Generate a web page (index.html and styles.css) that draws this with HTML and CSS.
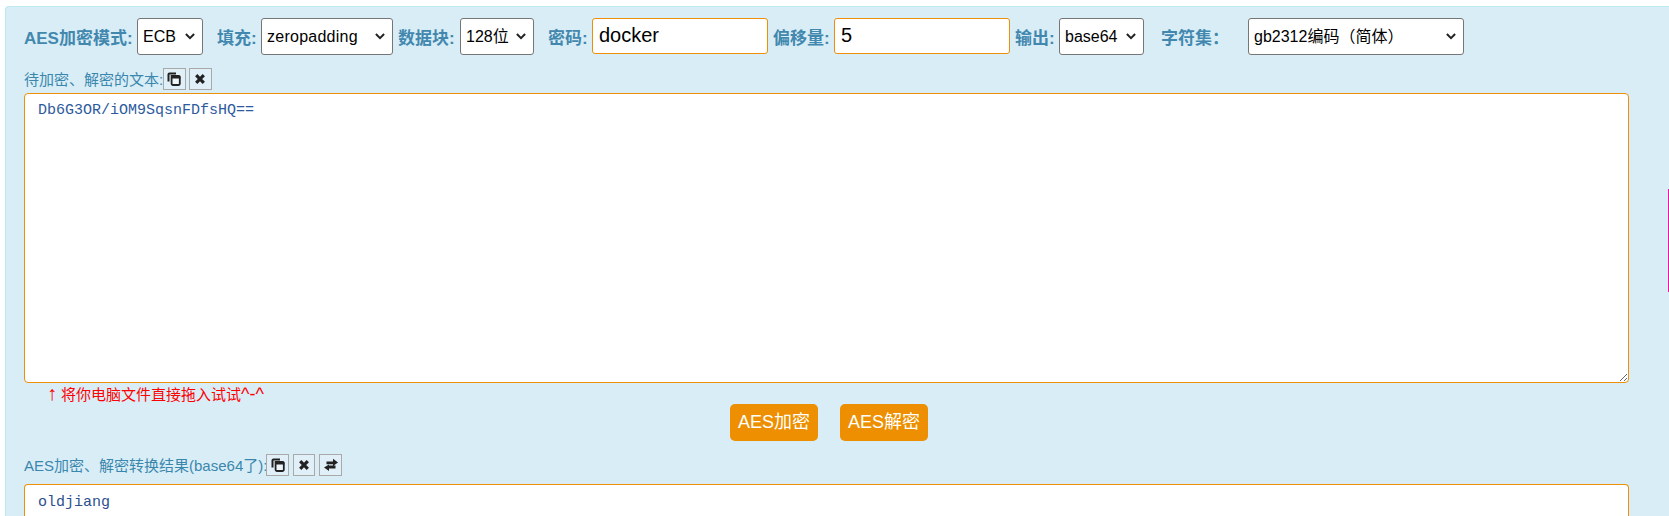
FILE: index.html
```html
<!DOCTYPE html>
<html lang="zh-CN">
<head>
<meta charset="utf-8">
<title>AES加密</title>
<link rel="stylesheet" href="styles.css">
</head>
<body>
<main class="panel">
  <form class="options">
    <label class="opt opt-mode">AES加密模式:</label>
    <select class="sel sel-mode"><option>ECB</option></select>
    <label class="opt opt-pad">填充:</label>
    <select class="sel sel-pad"><option>zeropadding</option></select>
    <label class="opt opt-block">数据块:</label>
    <select class="sel sel-block"><option>128位</option></select>
    <label class="opt opt-pass">密码:</label>
    <input class="field" type="text" value="docker">
    <label class="opt opt-iv">偏移量:</label>
    <input class="field" type="text" value="5">
    <label class="opt opt-out">输出:</label>
    <select class="sel sel-out"><option>base64</option></select>
    <label class="opt opt-charset">字符集：</label>
    <select class="sel sel-charset"><option>gb2312编码（简体）</option></select>
  </form>

  <div class="cap cap-first">
    <span>待加密、解密的文本:</span>
    <button class="tool" type="button" title="复制">
      <svg viewBox="0 0 14 14" class="ico"><path d="M1.5 9.5V2.5a1 1 0 0 1 1-1H9" class="ico-line"/><path d="M4.6 4h6.8a1.4 1.4 0 0 1 1.4 1.4v6.2a1.4 1.4 0 0 1-1.4 1.4H6a1.4 1.4 0 0 1-1.4-1.4z" class="ico-front"/><path d="M4 3.4h8.4l1 1.2v2H4z" class="ico-fill"/></svg>
    </button>
    <button class="tool" type="button" title="清空">
      <svg viewBox="0 0 14 14" class="ico"><path d="M3.2 3.2l7.6 7.6M10.8 3.2l-7.6 7.6" class="ico-x"/></svg>
    </button>
  </div>
  <textarea class="text text-in" spellcheck="false">Db6G3OR/iOM9SqsnFDfsHQ==</textarea>
  <p class="hint"><span class="hint-arrow">↑</span>将你电脑文件直接拖入试试<span class="hint-face">^-^</span></p>

  <div class="actions">
    <button class="go" type="button">AES加密</button>
    <button class="go" type="button">AES解密</button>
  </div>

  <div class="cap cap-second">
    <span>AES加密、解密转换结果(base64了):</span>
    <button class="tool" type="button" title="复制">
      <svg viewBox="0 0 14 14" class="ico"><path d="M1.5 9.5V2.5a1 1 0 0 1 1-1H9" class="ico-line"/><path d="M4.6 4h6.8a1.4 1.4 0 0 1 1.4 1.4v6.2a1.4 1.4 0 0 1-1.4 1.4H6a1.4 1.4 0 0 1-1.4-1.4z" class="ico-front"/><path d="M4 3.4h8.4l1 1.2v2H4z" class="ico-fill"/></svg>
    </button>
    <button class="tool" type="button" title="清空">
      <svg viewBox="0 0 14 14" class="ico"><path d="M3.2 3.2l7.6 7.6M10.8 3.2l-7.6 7.6" class="ico-x"/></svg>
    </button>
    <button class="tool" type="button" title="交换">
      <svg viewBox="0 0 14 14" class="ico"><path d="M2.5 3.4H9V.8L14 4.6 9 8V6.2H2.5zM11.5 7.6V10.4H5V13L0 9.6 5 6.4V7.6z" class="ico-solid"/></svg>
    </button>
  </div>
  <textarea class="text text-out" spellcheck="false">oldjiang</textarea>
</main>
<div class="side-mark"></div>
</body>
</html>
```
FILE: styles.css
```css
html, body {
  margin: 0;
  padding: 0;
  height: 516px;
  overflow: hidden;
  background: #fff;
}

body {
  position: relative;
  font-family: "Liberation Sans", "Noto Sans CJK SC", sans-serif;
}

.panel {
  box-sizing: border-box;
  width: 1664px;
  height: 510px;
  margin: 6px 0 0 5px;
  padding: 11px 0 0 18px;
  background: #d9edf7;
  border: 1px solid #bce8f1;
  border-width: 1px 0 0 1px;
  border-radius: 4px 0 0 0;
  color: #3a87ad;
}

.options {
  display: flex;
  align-items: center;
  height: 37px;
}

.opt {
  font-size: 17px;
  font-weight: 700;
  white-space: nowrap;
  color: #4288ae;
}

.opt-mode { width: 113px; }
.opt-pad { width: 44px; margin-left: 14px; }
.opt-block { width: 62px; margin-left: 5px; }
.opt-pass { width: 44px; margin-left: 14px; }
.opt-iv { width: 61px; margin-left: 5px; }
.opt-out { width: 44px; margin-left: 5px; }
.opt-charset { width: 87px; margin-left: 17px; }

.sel {
  box-sizing: border-box;
  appearance: none;
  height: 37px;
  margin: 0;
  padding: 0 20px 0 5px;
  font-family: inherit;
  font-size: 16px;
  color: #000;
  background-color: #fff;
  background-image: url("data:image/svg+xml,%3Csvg xmlns='http://www.w3.org/2000/svg' width='10' height='7' viewBox='0 0 10 7'%3E%3Cpath d='M.9 1l4.1 4.1L9.1 1' fill='none' stroke='%23222' stroke-width='2'/%3E%3C/svg%3E");
  background-repeat: no-repeat;
  background-position: right 7px center;
  border: 1px solid #767676;
  border-radius: 3px;
}

.sel-mode { width: 66px; }
.sel-pad { width: 132px; letter-spacing: .25px; }
.sel-block { width: 74px; }
.sel-out { width: 85px; }
.sel-charset { width: 216px; }

.field {
  box-sizing: border-box;
  width: 176px;
  height: 36px;
  margin: 0 0 1px;
  padding: 0 6px 2px;
  font-family: inherit;
  font-size: 20px;
  color: #000;
  background: #fff;
  border: 1px solid #ed9007;
  border-radius: 3px;
  outline: none;
}

.cap {
  display: flex;
  align-items: center;
  height: 22px;
  font-size: 15px;
  white-space: nowrap;
}

.cap span { margin-top: -2px; }

.cap-first { margin-top: 13px; }
.cap-first .tool + .tool { margin-left: 3.5px; }
.cap-second { margin-top: 13px; }
.cap-second span { margin-right: -1px; }

.tool {
  box-sizing: border-box;
  display: flex;
  align-items: center;
  justify-content: center;
  width: 22.5px;
  height: 22px;
  margin: 0 0 0 4px;
  padding: 0;
  background: #e1f0f8;
  border: 1px solid #a9a9a9;
}

.cap span + .tool { margin-left: 0; }

.ico { width: 14px; height: 14px; display: block; }
.ico-line { fill: none; stroke: #222; stroke-width: 2; }
.ico-front { fill: #eef6fa; stroke: #222; stroke-width: 1.8; }
.ico-fill { fill: #222; }
.ico-x { fill: none; stroke: #222; stroke-width: 3.2; }
.ico-solid { fill: #222; }

.text {
  display: block;
  box-sizing: border-box;
  width: 1605px;
  margin: 0;
  font-family: "Liberation Mono", monospace;
  font-size: 15px;
  line-height: 20px;
  color: #2d5a9e;
  background: #fff;
  border: 1px solid #ed9007;
  border-radius: 4px;
  outline: none;
}

.text-in {
  height: 290px;
  margin-top: 3px;
  padding: 7px 13px;
}

.text-out {
  height: 32px;
  margin-top: 8px;
  padding: 8px 13px 0;
  overflow: hidden;
  resize: none;
  border-bottom: 0;
  border-radius: 4px 4px 0 0;
  color: #2b4f8f;
}

.hint {
  height: 21px;
  margin: 0;
  padding-left: 23px;
  font-size: 15px;
  line-height: 21px;
  color: #f00;
  white-space: nowrap;
}

.hint-arrow {
  display: inline-block;
  width: 14px;
  font-size: 20px;
  line-height: 20px;
}

.hint-face {
  font-size: 18px;
  line-height: 18px;
}

.actions {
  display: flex;
  justify-content: center;
  gap: 22px;
  width: 1610px;
  height: 37px;
}

.go {
  box-sizing: border-box;
  width: 88px;
  height: 37px;
  margin: 0;
  padding: 0 0 6px;
  font-family: inherit;
  font-size: 18px;
  color: #fff;
  background: #ed8f00;
  border: none;
  border-radius: 5px;
}

.side-mark {
  position: absolute;
  top: 189px;
  right: 0;
  width: 1px;
  height: 103px;
  background: #e5169b;
}
```
